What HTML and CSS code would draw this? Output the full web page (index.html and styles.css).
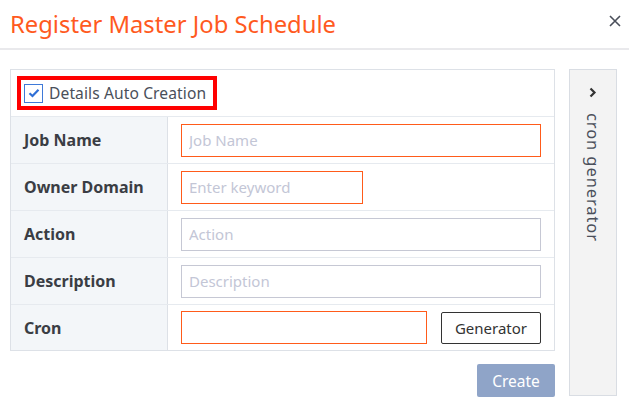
FILE: index.html
```html
<!DOCTYPE html>
<html>
<head>
<meta charset="utf-8">
<link rel="stylesheet" href="styles.css">
</head>
<body>
<div class="dialog">
  <div class="header">
    <h1 class="title">Register Master Job Schedule</h1>
    <span class="close"><svg width="12" height="12" viewBox="0 0 12 12"><path d="M1 1 L11 11 M11 1 L1 11" stroke="#4a4f5a" stroke-width="1.6" fill="none"/></svg></span>
  </div>
  <div class="main">
    <div class="form-area">
      <div class="table">
        <div class="check-row">
          <label class="check-box-wrap">
            <span class="checkbox">
              <svg width="12" height="10" viewBox="0 0 12 10"><path d="M1.5 5.2 L4.5 8 L10.5 1.8" fill="none" stroke="#2f6fd6" stroke-width="2.2"/></svg>
            </span>
            <span class="check-label">Details Auto Creation</span>
          </label>
        </div>
        <div class="row">
          <div class="label">Job Name</div>
          <div class="cell"><input class="input req full" placeholder="Job Name"></div>
        </div>
        <div class="row">
          <div class="label">Owner Domain</div>
          <div class="cell"><input class="input req short" placeholder="Enter keyword"></div>
        </div>
        <div class="row">
          <div class="label">Action</div>
          <div class="cell"><input class="input full" placeholder="Action"></div>
        </div>
        <div class="row">
          <div class="label">Description</div>
          <div class="cell"><input class="input full" placeholder="Description"></div>
        </div>
        <div class="row last">
          <div class="label">Cron</div>
          <div class="cell"><input class="input req cron"><button class="gen-btn">Generator</button></div>
        </div>
      </div>
      <div class="actions">
        <button class="create-btn">Create</button>
      </div>
    </div>
    <div class="side">
      <svg class="chev" width="8" height="11" viewBox="0 0 8 11"><path d="M1.5 1.5 L5.5 5.5 L1.5 9.5" fill="none" stroke="#333" stroke-width="2.2"/></svg>
      <span class="side-text">cron generator</span>
    </div>
  </div>
</div>
</body>
</html>
```
FILE: styles.css
```css
html, body {
  margin: 0;
  padding: 0;
  background: #fff;
}
body {
  font-family: "Noto Sans", "Open Sans", sans-serif;
  color: #333;
}
.dialog {
  width: 629px;
  height: 403px;
}
.header {
  height: 48px;
  border-bottom: 2px solid #e9e9ec;
  display: flex;
  align-items: center;
  justify-content: space-between;
  padding: 0 10px;
  box-sizing: content-box;
}
.title {
  margin: 0;
  font-size: 23.8px;
  font-weight: 400;
  color: #ff5a1e;
  letter-spacing: 0;
  margin-top: -1px;
}
.close {
  display: flex;
  margin-top: -6px;
  margin-right: -2px;
}
.main {
  display: flex;
  align-items: flex-start;
  padding: 19px 0 0 10px;
}
.form-area {
  width: 545px;
}
.table {
  border: 1px solid #dde1e7;
  box-sizing: border-box;
}
.check-row {
  height: 46px;
  border-bottom: 1px solid #e6eaef;
  display: flex;
  align-items: center;
  padding-left: 6px;
}
.check-box-wrap {
  display: flex;
  align-items: center;
  border: 4px solid #ff0000;
  height: 26px;
  padding: 0 0 0 3px;
  width: 189px;
}
.checkbox {
  width: 19px;
  height: 19px;
  border: 1.5px solid #3f7ad8;
  box-sizing: border-box;
  display: flex;
  align-items: center;
  justify-content: center;
  margin-right: 6px;
  background: #fff;
}
.check-label {
  font-size: 15.6px;
  color: #4a4f5a;
  letter-spacing: 0.1px;
}
.row {
  display: flex;
  height: 46px;
  border-bottom: 1px solid #e6eaef;
}
.row.last {
  border-bottom: none;
  height: 45px;
}
.label {
  background: #f3f6f9;
  border-right: 1px solid #dde1e7;
  display: flex;
  align-items: center;
  padding-left: 13px;
  box-sizing: border-box;
  width: 157px;
  font-size: 16px;
  font-weight: 700;
  color: #3a3d44;
}
.cell {
  flex: 1;
  display: flex;
  align-items: center;
  padding-left: 13px;
}
.input {
  height: 33px;
  box-sizing: border-box;
  border: 1px solid #c6c8d4;
  font-family: "Noto Sans", "Open Sans", sans-serif;
  font-size: 15px;
  padding: 0 7px;
  outline: none;
  color: #333;
}
.input::placeholder {
  color: #c3c6d6;
}
.input.req {
  border: 1.5px solid #ff5b1a;
}
.full {
  width: 360px;
}
.short {
  width: 182px;
}
.cron {
  width: 246px;
}
.gen-btn {
  margin-left: 14px;
  width: 100px;
  height: 32px;
  background: #fff;
  border: 1.5px solid #333;
  border-radius: 2px;
  font-family: "Noto Sans", "Open Sans", sans-serif;
  font-size: 15px;
  color: #333;
  padding: 0;
}
.actions {
  display: flex;
  justify-content: flex-end;
  margin-top: 13px;
}
.create-btn {
  width: 78px;
  height: 33px;
  background: #8fa4c8;
  border: none;
  border-radius: 2px;
  color: #fff;
  font-family: "Noto Sans", "Open Sans", sans-serif;
  font-size: 15.5px;
  padding: 0;
}
.side {
  margin-left: 14px;
  width: 48px;
  height: 327px;
  box-sizing: border-box;
  background: #f3f3f3;
  border: 1px solid #d9dde3;
  display: flex;
  flex-direction: column;
  align-items: center;
  padding-top: 17px;
}
.side-text {
  writing-mode: vertical-rl;
  font-size: 16.5px;
  color: #4a4f5a;
  margin-top: 15px;
  letter-spacing: 0.9px;
}
```
